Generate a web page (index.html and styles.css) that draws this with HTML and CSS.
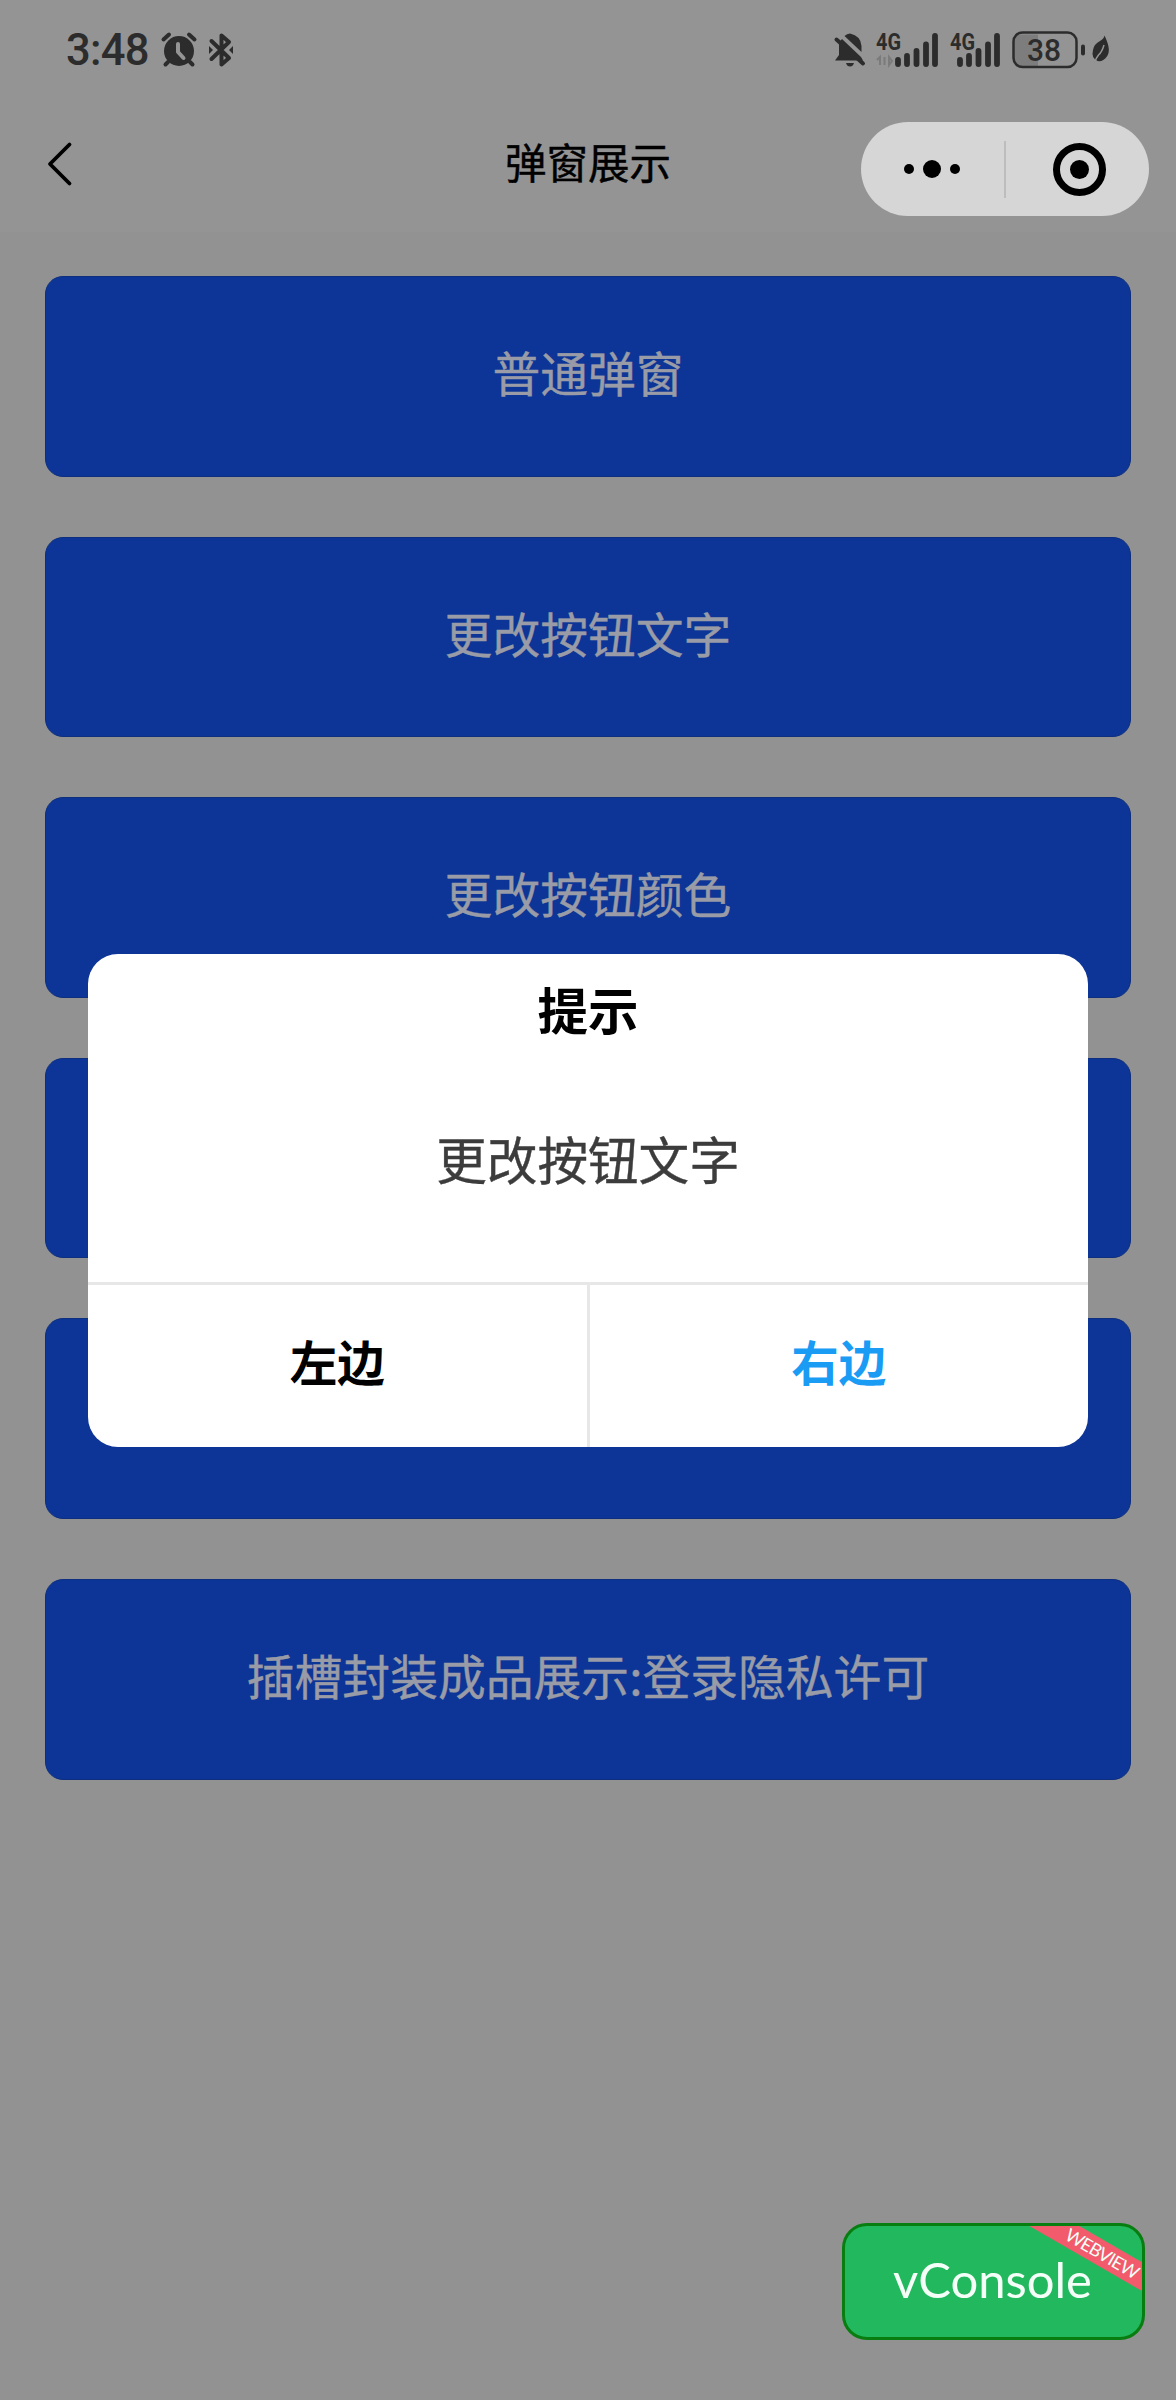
FILE: index.html
```html
<!DOCTYPE html>
<html lang="zh-CN">
<head>
    <meta charset="UTF-8">
    <meta name="viewport" content="width=device-width, initial-scale=1.0">
    <title>弹窗展示</title>
    <link rel="stylesheet" href="styles.css">
</head>
<body>

    <!-- 状态栏 -->
    <div class="status-bar">
        <span class="time">3:48</span>
        <svg class="icon-alarm" width="36" height="36" viewBox="0 0 36 36">
            <circle cx="18" cy="19" r="15" fill="#2c2c2c"/>
            <path d="M2.500 7.500L8 2.500M28 2.500L33.500 7.500M7 30L4.500 32.500M29 30L31.500 32.500" stroke="#2c2c2c" stroke-width="4" stroke-linecap="round"/>
            <path d="M17 12V20L22.500 26" stroke="#949494" stroke-width="4" fill="none" stroke-linecap="round" stroke-linejoin="round"/>
        </svg>
        <svg class="icon-bluetooth" width="26" height="36" viewBox="0 0 26 36">
            <path d="M3.500 9L21 26L13.500 32.500V22M3.500 27L21 10L13.500 3.500V14" stroke="#2c2c2c" stroke-width="4" fill="none" stroke-linecap="round" stroke-linejoin="round"/>
            <path d="M1 14L5 18L1 22ZM25 14L21 18L25 22Z" fill="#2c2c2c"/>
        </svg>

        <div class="status-right">
            <svg width="32" height="36" viewBox="0 0 32 36">
                <path d="M1 28.500L5 23V12Q5.500 9 8 7L27 25L29 28.500ZM10.500 4Q13 1.500 16 1.500Q27 4 27.500 14V20Z" fill="#2c2c2c"/>
                <path d="M12 31H20Q19 34.500 16 34.500T12 31Z" fill="#2c2c2c"/>
                <path d="M2.500 7.500L29 31.500" stroke="#2c2c2c" stroke-width="4" stroke-linecap="round"/>
            </svg>
            <svg class="signal-first" width="64" height="36" viewBox="0 0 64 36">
                <text class="net" x="0" y="18" textLength="25" lengthAdjust="spacingAndGlyphs">4G</text>
                <path d="M1 28L4 25V33M8.500 25V33M13 25V33L16 29Z" stroke="#7b7b7b" stroke-width="2" fill="none"/>
                <path d="M22 28V32M31 24V32M40.500 19V32M50 12.500V32M59 4V32" stroke="#2c2c2c" stroke-width="5.800" stroke-linecap="round"/>
            </svg>
            <svg class="signal-second" width="52" height="36" viewBox="0 0 52 36">
                <text class="net" x="0" y="18" textLength="25" lengthAdjust="spacingAndGlyphs">4G</text>
                <path d="M10 28V32M19 24V32M28.500 19V32M38 12.500V32M47 4V32" stroke="#2c2c2c" stroke-width="5.800" stroke-linecap="round"/>
            </svg>
            <svg class="battery" width="74" height="38" viewBox="0 0 74 38">
                <path d="M10 2.500H26V34.500H10Q2 34.500 2 27V10Q2 2.500 10 2.500Z" fill="#7d7d7d"/>
                <rect x="1.500" y="0.500" width="63" height="34.500" rx="9" fill="none" stroke="#2c2c2c" stroke-width="2.500"/>
                <rect x="69" y="12.500" width="4" height="11" rx="2" fill="#2c2c2c"/>
                <text class="level" x="15" y="29" textLength="34" lengthAdjust="spacingAndGlyphs">38</text>
            </svg>
            <svg class="leaf" width="18" height="30" viewBox="0 0 18 30">
                <path d="M12.500 0.500Q20 16 14.500 22Q11 27 5.500 26Q-1 23 1 15Q2 9 8 6Q12 3.500 12.500 0.500Z" fill="#2c2c2c"/>
                <path d="M12 10Q10 17 6.500 20Q4 23 2.500 28" stroke="#949494" stroke-width="1.500" fill="none"/>
            </svg>
        </div>
    </div>

    <!-- 导航栏 -->
    <div class="nav-bar">
        <svg class="back" width="26" height="44" viewBox="0 0 26 44">
            <path d="M22.500 2.500L3 22L22.500 41.500" stroke="#000" stroke-width="3.800" fill="none" stroke-linecap="round" stroke-linejoin="round"/>
        </svg>
        <h1>弹窗展示</h1>
        <div class="capsule">
            <svg width="288" height="94" viewBox="0 0 288 94">
                <circle cx="48" cy="47" r="5"/>
                <circle cx="71" cy="47" r="9"/>
                <circle cx="94" cy="47" r="5"/>
                <path d="M144 19V76" stroke="#b4b4b4" stroke-width="1.500"/>
                <circle cx="218.500" cy="47.500" r="23" fill="none" stroke="#000" stroke-width="7"/>
                <circle cx="218.500" cy="47.500" r="9.500"/>
            </svg>
        </div>
    </div>

    <!-- 按钮列表 -->
    <div class="btn-list">
        <button class="btn">普通弹窗</button>
        <button class="btn">更改按钮文字</button>
        <button class="btn">更改按钮颜色</button>
        <button class="btn"></button>
        <button class="btn"></button>
        <button class="btn">插槽封装成品展示:登录隐私许可</button>
    </div>

    <!-- 弹窗 -->
    <div class="modal">
        <div class="modal-title">提示</div>
        <div class="modal-content">更改按钮文字</div>
        <div class="modal-footer">
            <div class="modal-btn">左边</div>
            <div class="modal-btn confirm">右边</div>
        </div>
    </div>

    <div class="vconsole">
        vConsole
        <span class="ribbon">WEBVIEW</span>
    </div>

</body>
</html>
```

FILE: styles.css
```css
* {
    box-sizing: border-box;
}

body {
    margin: 0;
    height: 2400px;
    position: relative;
    overflow: hidden;
    background-color: #929292;
    font-family: "Noto Sans CJK SC", sans-serif;
}

svg {
    display: block;
    flex: none;
    overflow: visible;
}

/* 状态栏 */
.status-bar {
    display: flex;
    align-items: flex-start;
    height: 100px;
    padding: 32px 66px 0 66px;
    background-color: #949494;
}

.time {
    width: 95px;
    font-family: Roboto, sans-serif;
    font-size: 43.500px;
    font-weight: 500;
    line-height: 38px;
    letter-spacing: -0.700px;
    color: #2c2c2c;
}

.icon-bluetooth {
    margin-left: 11px;
}

.status-right {
    display: flex;
    margin-left: auto;
}

.signal-first {
    margin-left: 10px;
}

.signal-second {
    margin-left: 10px;
}

.battery {
    margin-left: 10px;
}

.leaf {
    margin: 3px 0 0 6px;
}

.net {
    font: 700 23px Roboto, sans-serif;
    fill: #2c2c2c;
}

.level {
    font: 500 32px Roboto, sans-serif;
    fill: #2c2c2c;
}

/* 导航栏 */
.nav-bar {
    display: grid;
    grid-template-columns: 1fr auto 1fr;
    height: 132px;
    padding: 0 27px 0 47px;
    background-color: #949494;
}

.back {
    margin-top: 42px;
}

.nav-bar h1 {
    margin: 30px 0 0 -20px;
    font-size: 41.500px;
    font-weight: 400;
    line-height: 62px;
    color: #000;
    -webkit-text-stroke: 0.400px;
}

.capsule {
    justify-self: end;
    width: 288px;
    height: 94px;
    margin-top: 22px;
    border-radius: 47px;
    background-color: #d6d6d6;
}

/* 按钮列表 */
.btn-list {
    display: flex;
    flex-direction: column;
    gap: 60px;
    padding: 44px 45px 0;
}

.btn {
    height: 200.600px;
    padding: 0 0 9px;
    border: 1px solid #0d2f7e;
    border-radius: 18px;
    background-color: #0c3597;
    font-family: inherit;
    font-size: 47.800px;
    color: #999ba6;
    -webkit-text-stroke: 0.400px;
}

/* 弹窗 */
.modal {
    position: absolute;
    top: 954px;
    left: 88px;
    display: flex;
    flex-direction: column;
    width: 1000px;
    height: 493px;
    border-radius: 30px;
    background-color: #fff;
    overflow: hidden;
    text-align: center;
}

.modal-title {
    height: 114px;
    font-size: 50.500px;
    font-weight: 700;
    line-height: 109px;
    color: #000;
}

.modal-content {
    flex: 1;
    padding-top: 52px;
    font-size: 50.600px;
    line-height: 76px;
    color: #3c3c3c;
    -webkit-text-stroke: 0.400px;
}

.modal-footer {
    display: flex;
    height: 165px;
    border-top: 3px solid #e7e7e7;
}

.modal-btn {
    flex: 1;
    font-size: 47.500px;
    font-weight: 700;
    line-height: 152px;
    color: #000;
}

.confirm {
    border-left: 3px solid #e7e7e7;
    color: #1a9cf4;
}

/* 调试按钮 */
.vconsole {
    position: absolute;
    top: 2223px;
    left: 842px;
    width: 303px;
    height: 117px;
    padding-left: 48px;
    border: 3px solid #087d10;
    border-radius: 25px;
    background-color: #22b95e;
    overflow: hidden;
    font-family: Lato, sans-serif;
    font-size: 49px;
    line-height: 107px;
    color: #f4fff8;
}

.ribbon {
    position: absolute;
    top: 15px;
    right: -55px;
    width: 190px;
    height: 25px;
    background-color: #f15b6c;
    font-size: 18px;
    line-height: 24px;
    letter-spacing: -0.800px;
    text-align: center;
    transform: rotate(30deg);
}
```
